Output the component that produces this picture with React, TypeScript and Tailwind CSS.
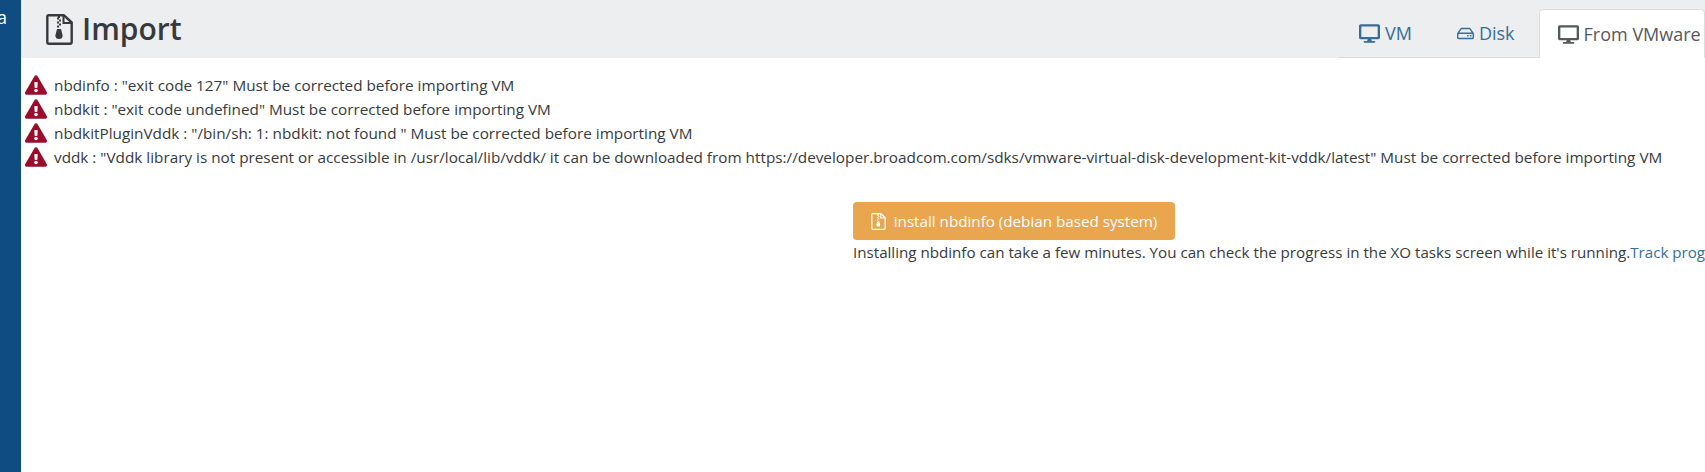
import { FaDesktop, FaRegHdd, FaExclamationTriangle } from "react-icons/fa";

const errors = [
  'nbdinfo : "exit code 127" Must be corrected before importing VM',
  'nbdkit : "exit code undefined" Must be corrected before importing VM',
  'nbdkitPluginVddk : "/bin/sh: 1: nbdkit: not found " Must be corrected before importing VM',
  'vddk : "Vddk library is not present or accessible in /usr/local/lib/vddk/ it can be downloaded from https://developer.broadcom.com/sdks/vmware-virtual-disk-development-kit-vddk/latest" Must be corrected before importing VM',
];

function ArchiveIcon({ className }: { className: string }) {
  return (
    <svg viewBox="0 0 27 31" className={className} fill="none" stroke="currentColor">
      <path d="M2.5 1.3H18L25.7 8.5V28a1.7 1.7 0 0 1-1.7 1.7H3A1.7 1.7 0 0 1 1.3 28V2.5a1.2 1.2 0 0 1 1.2-1.2Z" strokeWidth="2.4" strokeLinejoin="round" />
      <path d="M17.5 1.5V9H25.5" strokeWidth="2" />
      <path d="M13 2v2M11 4.5h2M13 6.5h2M11 8.5h2M13 10.5h2M11 12.5h2" strokeWidth="2" />
      <path d="M11 15h4l1.6 6.5a3.6 3.6 0 1 1-7.2 0Z" fill="currentColor" stroke="none" />
    </svg>
  );
}

export default function App() {
  return (
    <div className="flex h-[472px] w-[1705px] overflow-hidden bg-white text-[15.3px] text-[#373a3c] [font-family:'Open_Sans',sans-serif]">
      <aside className="w-[21px] shrink-0 overflow-hidden bg-[#0f4c81] pt-[5px] text-[18px] leading-[24px] text-white">
        <span className="-ml-[3px] block">a</span>
      </aside>
      <main className="flex min-w-0 flex-1 flex-col">
        <header className="flex h-[58px] shrink-0 items-end justify-between bg-[#eceeef]">
          <h2 className="flex items-center gap-[9px] self-center pl-[25px] text-[30px] font-semibold leading-none text-[#373a3c]">
            <ArchiveIcon className="h-[31px] w-[27px]" />
            <span>Import</span>
          </h2>
          <nav className="flex h-[49px] w-[367px] shrink-0 items-stretch text-[18px]">
            <a className="flex items-center gap-[5px] border-b border-[#dddddd] pl-[21px] pr-[45px] text-[#366e98]">
              <FaDesktop className="text-[21px]" /> VM
            </a>
            <a className="flex items-center gap-[5px] border-b border-[#dddddd] pr-[24px] text-[#366e98]">
              <FaRegHdd className="text-[17px]" /> Disk
            </a>
            <a className="flex flex-1 items-center gap-[5px] whitespace-nowrap rounded-t-[4px] border border-b-0 border-[#dddddd] bg-white pl-[18px] text-[#55595c]">
              <FaDesktop className="text-[21px]" /> From VMware
            </a>
          </nav>
        </header>
        <section className="flex flex-col pt-[15px]">
          {errors.map((e) => (
            <div key={e} className="flex h-[24px] items-center gap-[7px] whitespace-nowrap pl-[4px]">
              <FaExclamationTriangle className="text-[22px] text-[#9a0e2c]" />
              <span>{e}</span>
            </div>
          ))}
        </section>
        <section className="ml-[832px] mt-[33px] flex flex-col items-start whitespace-nowrap text-[15.15px]">
          <button className="flex h-[38px] w-[322px] items-center justify-center gap-[8px] rounded-[4px] bg-[#e9a64e] text-[15.2px] text-white">
            <ArchiveIcon className="h-[17px] w-[15px]" />
            install nbdinfo (debian based system)
          </button>
          <p className="leading-[24px]">
            Installing nbdinfo can take a few minutes. You can check the progress in the XO tasks screen while it's running.
            <a className="text-[#366e98]">Track progress</a>
          </p>
        </section>
      </main>
    </div>
  );
}
